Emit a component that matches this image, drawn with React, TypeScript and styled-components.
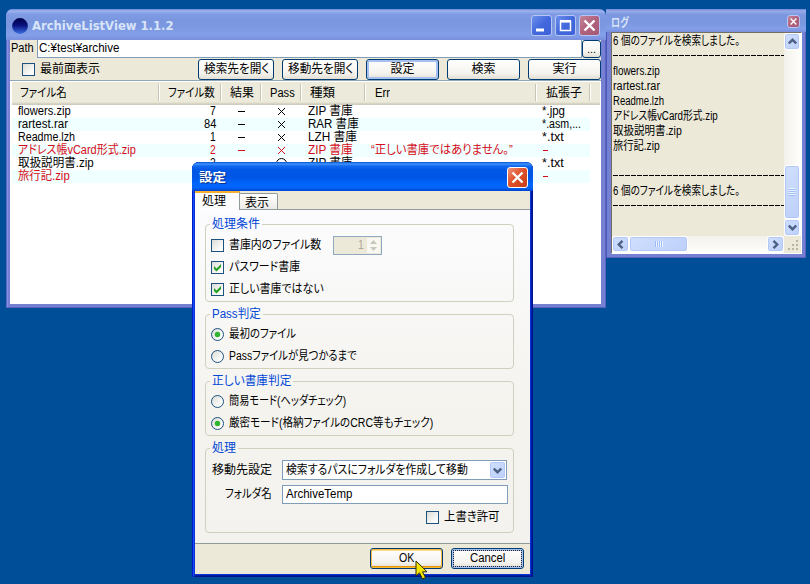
import React, { useLayoutEffect, useRef, useState } from "react";
import styled, { createGlobalStyle, css } from "styled-components";

const Global = createGlobalStyle`
  * { box-sizing: border-box; }
  body { margin: 0; overflow: hidden; background: #004e98; }
  body, button, input { font: 12px/13px "Liberation Sans", "Noto Sans CJK JP", sans-serif; color: #000; }
`;

const Desktop = styled.main`
  position: relative;
  width: 810px;
  height: 584px;
  overflow: hidden;
  background: #004e98;
`;

/* ---------- text set to a known advance width ---------- */
const FitBox = styled.span`
  display: inline-block;
  flex: none;
  height: 13px;
  line-height: 13px;
  white-space: pre;
  text-align: left;
  vertical-align: top;
`;
const FitInner = styled.span`
  display: inline-block;
  height: 13px;
  line-height: 13px;
  font-feature-settings: "palt";
  transform-origin: 0 50%;
`;
function Fit({ w, children }: { w: number; children: string }) {
  const ref = useRef<HTMLSpanElement>(null);
  const [scale, setScale] = useState(1);
  useLayoutEffect(() => {
    if (ref.current && ref.current.offsetWidth) setScale(w / ref.current.offsetWidth);
  }, [w, children]);
  return (
    <FitBox style={{ width: w }}>
      <FitInner ref={ref} style={{ transform: `scaleX(${scale})` }}>{children}</FitInner>
    </FitBox>
  );
}

/* ---------- window frames ---------- */
const MainWindow = styled.section`
  position: absolute;
  left: 6px;
  top: 9px;
  width: 600px;
  height: 299px;
  display: flex;
  flex-direction: column;
  padding: 0 5px 4px 4px;
  border-radius: 7px 7px 0 0;
  background: #7680d2;
  box-shadow: inset 1px 0 #5a68c8, inset -1px -1px #5a62c0, inset 2px 0 #8490e0;
`;
const LogWindow = styled.section`
  position: absolute;
  left: 606px;
  top: 9px;
  width: 200px;
  height: 249px;
  display: flex;
  flex-direction: column;
  padding: 0 4px 4px 5px;
  background: #7680d2;
  box-shadow: inset 1px 0 #4a58b8, inset -1px -1px #5a62c0;
`;
const Dialog = styled.section`
  position: absolute;
  left: 192px;
  top: 162px;
  width: 341px;
  height: 415px;
  display: flex;
  flex-direction: column;
  padding: 0 3px 3px;
  border-radius: 7px 7px 0 0;
  background: #0831d9;
  box-shadow: inset 1px 0 #0019cf, inset 2px 0 #1650ee, inset -1px -1px #00138c, inset -2px -2px #001ea0;
`;

const TitleBar = styled.header<{ $kind: "main" | "tool" | "dialog" }>`
  flex: none;
  display: flex;
  align-items: center;
  color: #d8e4f8;
  font-weight: bold;
  ${(p) => p.$kind === "main" && css`
    height: 31px;
    margin: 0 -5px 0 -4px;
    padding: 2px 6px 0 6px;
    border-radius: 7px 7px 0 0;
    font: bold 13px/15px "DejaVu Sans", sans-serif;
    background: linear-gradient(#6c86d8 0, #9db4ee 2px, #7f9be4 5px, #7a96df 12px, #7b98e0 18px, #829fe8 26px, #7b8fdc 31px);
  `}
  ${(p) => p.$kind === "tool" && css`
    height: 23px;
    margin: 0 -4px 0 -5px;
    padding: 2px 6px 0 5px;
    background: linear-gradient(#7186d8 0, #95abe9 2px, #7b97df 6px, #7b97e0 14px, #829fe8 20px, #7b8fdc 23px);
  `}
  ${(p) => p.$kind === "dialog" && css`
    height: 29px;
    margin: 0 -3px;
    padding: 1px 5px 0 7px;
    border-radius: 7px 7px 0 0;
    color: #fff;
    text-shadow: 1px 1px #0a318c;
    background: linear-gradient(#0850d0 0, #3c94ff 2px, #1268ef 4px, #0057e5 8px, #0055e5 15px, #0066ff 23px, #0063f6 26px, #0042cc 29px);
  `}
`;
const Spacer = styled.div`flex: 1;`;
const Caption = styled.h1<{ $indent?: number; $drop?: number }>`
  margin: ${(p) => p.$drop ?? 3}px 0 0 ${(p) => p.$indent ?? 0}px;
  font: inherit;
  line-height: 13px;
  white-space: nowrap;
`;
const CaptionButtons = styled.div`display: flex; gap: 3px;`;
const CaptionButton = styled.button<{ $tone: "blue" | "mauve" | "red"; $size?: number }>`
  display: block;
  flex: none;
  width: ${(p) => p.$size ?? 21}px;
  height: ${(p) => p.$size ?? 21}px;
  padding: 0;
  border: 1px solid ${(p) => (p.$tone === "red" ? "#fff" : "#b6c6f2")};
  border-radius: 3px;
  background: ${(p) => ({
    blue: "linear-gradient(135deg, #6d90ec, #4268dd 50%, #3e62d8)",
    mauve: "linear-gradient(135deg, #c28398, #b0617b 50%, #a65978)",
    red: "linear-gradient(135deg, #ee9478, #e0522c 45%, #c93c16)",
  })[p.$tone]};
  svg { display: block; width: 100%; height: 100%; }
`;
const Cross = () => (
  <svg viewBox="0 0 19 19"><path d="M4.5 4.5l10 10M14.5 4.5l-10 10" stroke="#fff" strokeWidth="2.4" /></svg>
);

/* ---------- main window ---------- */
const PathRow = styled.div`
  flex: none;
  display: flex;
  height: 18px;
  background: #ece9d8;
`;
const PathLabel = styled.label`
  width: 27px;
  padding: 2px 0 0 1px;
`;
const PathInput = styled.div`
  width: 546px;
  height: 18px;
  padding: 2px 1px;
  border: 1px solid #7f9db9;
  border-top: 0;
  background: #fff;
`;
const Toolbar = styled.div`
  flex: none;
  display: flex;
  align-items: center;
  gap: 8px;
  height: 23px;
  padding: 0 0 0 12px;
  background: #ece9d8;
  border-bottom: 1px solid #91a7b4;
`;
const Button = styled.button<{ $w: number; $look?: "focus" | "hot" | "dotted" }>`
  position: relative;
  flex: none;
  display: flex;
  align-items: center;
  justify-content: center;
  width: ${(p) => p.$w}px;
  height: 21px;
  padding: 0;
  border: 1px solid #003c74;
  border-radius: 3px;
  background: linear-gradient(#fff, #f4f3ee 70%, #e2ded2);
  ${(p) => (p.$look === "focus" || p.$look === "dotted") && css`
    box-shadow: inset 0 0 0 2px #a6c0f0;
  `}
  ${(p) => p.$look === "hot" && css`
    box-shadow: inset 0 0 0 1px #f8b83b, inset 0 -2px #e59700, inset 0 2px #fde09a;
  `}
  ${(p) => p.$look === "dotted" && css`
    &::after { content: ""; position: absolute; inset: 1px; border: 1px dotted #222; }
  `}
`;
const MiniButton = styled(Button)`
  width: 19px;
  height: 18px;
  padding-top: 1px;
  font-size: 11px;
`;
const List = styled.div`
  flex: 1;
  padding: 1px 1px 0 2px;
  background: #fff;
  overflow: hidden;
`;
const columns = "147px 62px 40px 40px 64px 171px 54px";
const HeaderRow = styled.div`
  display: grid;
  grid-template-columns: ${columns};
  height: 23px;
  padding-top: 1px;
  background: linear-gradient(#ebeadb 0, #ebeadb 20px, #dedac9 21px, #cbc7b8 23px);
`;
const HeaderCell = styled.div<{ $align?: string; $pad?: number }>`
  display: flex;
  height: 17px;
  margin-top: 1px;
  padding: 3px 5px 0 ${(p) => p.$pad ?? 5}px;
  justify-content: ${(p) => p.$align ?? "flex-start"};
  border-right: 1px solid #c7c5b2;
  box-shadow: 1px 0 #fff;
`;
const Row = styled.div<{ $red?: boolean }>`
  display: grid;
  grid-template-columns: ${columns};
  width: 578px;
  height: 13px;
  color: ${(p) => (p.$red ? "#d80c18" : "#000")};
  &:nth-child(odd) { background: #f0ffff; }
`;
const Cell = styled.div<{ $align?: string; $pad?: number }>`
  display: flex;
  height: 13px;
  padding: 0 5px 0 ${(p) => p.$pad ?? 5}px;
  justify-content: ${(p) => p.$align ?? "flex-start"};
  white-space: nowrap;
`;
const Mark = styled.svg`
  width: 11px;
  height: 13px;
  fill: none;
  stroke: currentColor;
`;
const Dash = () => <Mark viewBox="0 0 11 13"><path d="M2 6.5h7" shapeRendering="crispEdges" /></Mark>;
const Times = () => <Mark viewBox="0 0 11 13"><path d="M2 3l7 7M9 3l-7 7" /></Mark>;
const Circle = () => <Mark viewBox="0 0 11 13"><circle cx="5.5" cy="6.5" r="5" /></Mark>;

type Entry = { name: string; w: number; count?: string; open?: boolean; kind?: string; kw?: number; ext?: string; ew?: number; red?: boolean; err?: string };
const entries: Entry[] = [
  { name: "flowers.zip", w: 53, count: "7", kind: "ZIP 書庫", kw: 45, ext: "*.jpg", ew: 23 },
  { name: "rartest.rar", w: 50, count: "84", kind: "RAR 書庫", kw: 51, ext: "*.asm,...", ew: 39 },
  { name: "Readme.lzh", w: 57, count: "1", kind: "LZH 書庫", kw: 49, ext: "*.txt", ew: 22 },
  { name: "アドレス帳vCard形式.zip", w: 118, count: "2", kind: "ZIP 書庫", kw: 45, red: true, err: "“正しい書庫ではありません。”" },
  { name: "取扱説明書.zip", w: 76, count: "2", open: true, kind: "ZIP 書庫", kw: 45, ext: "*.txt", ew: 22 },
  { name: "旅行記.zip", w: 52, red: true },
];

/* ---------- checks and radios ---------- */
const Choice = styled.label`
  display: flex;
  align-items: center;
  gap: 5px;
  height: 22px;
`;
const Box = styled.span<{ $round?: boolean }>`
  flex: none;
  width: 13px;
  height: 13px;
  border: 1px solid #1c5180;
  border-radius: ${(p) => (p.$round ? "50%" : "0")};
  background: linear-gradient(135deg, #dcdcd7, #fff 85%);
  svg { display: block; width: 11px; height: 11px; }
`;
function Check({ on }: { on?: boolean }) {
  return <Box>{on && <svg viewBox="0 0 11 11"><path d="M2 4v3l2.5 2.5L9 5V2L4.5 6.5z" fill="#21a121" /></svg>}</Box>;
}
function Radio({ on }: { on?: boolean }) {
  return <Box $round>{on && <svg viewBox="0 0 11 11"><circle cx="5.5" cy="5.5" r="2.7" fill="#2fb52f" /></svg>}</Box>;
}

/* ---------- log window ---------- */
const LogBody = styled.div`
  flex: 1;
  display: grid;
  grid-template-columns: 172px 17px;
  grid-template-rows: 203px 17px;
  border: 1px solid #716f64;
  border-right-color: #fff;
  border-bottom-color: #fff;
  background: #ece9d8;
`;
const LogText = styled.div`
  padding: 1px 0 0 1px;
  overflow: hidden;
`;
const LogLine = styled.div`
  height: 15px;
  padding-top: 1px;
  white-space: nowrap;
`;
const Rule = styled.div`
  height: 15px;
  background: repeating-linear-gradient(90deg, #000 0 5px, transparent 5px 6px) 0 6px / 100% 1px no-repeat;
`;
const Track = styled.div<{ $h?: boolean }>`
  display: flex;
  flex-direction: ${(p) => (p.$h ? "row" : "column")};
  background: linear-gradient(${(p) => (p.$h ? "180deg" : "90deg")}, #f3f1ec, #fefefb);
`;
const ScrollPart = styled.div<{ $w: number; $h: number }>`
  flex: none;
  display: flex;
  align-items: center;
  justify-content: center;
  width: ${(p) => p.$w}px;
  height: ${(p) => p.$h}px;
  border: 1px solid #fff;
  border-radius: 3px;
  background: linear-gradient(135deg, #d0dffe, #bdd0fb);
  box-shadow: inset 0 0 0 1px #b4c8f6;
`;
const Chevron = ({ turn = 0 }: { turn?: number }) => (
  <svg width="9" height="9" viewBox="0 0 9 9">
    <path d="M.8 2.5L4.5 6.2 8.2 2.5" fill="none" stroke="#4d6185" strokeWidth="2.4" transform={`rotate(${turn} 4.5 4.5)`} />
  </svg>
);
const Grip = ({ turn = 0 }: { turn?: number }) => (
  <svg width="8" height="8" viewBox="0 0 8 8">
    <g transform={`rotate(${turn} 4 4)`}>
      <path d="M1 .5h6M1 2.5h6M1 4.5h6M1 6.5h6" stroke="#eef4fe" />
      <path d="M1 1.5h6M1 3.5h6M1 5.5h6M1 7.5h6" stroke="#8cb0f8" strokeWidth=".7" />
    </g>
  </svg>
);
const SizeCorner = styled.svg`width: 16px; height: 16px;`;

/* ---------- settings dialog ---------- */
const Tabs = styled.div`
  flex: none;
  display: flex;
  align-items: flex-end;
  height: 19px;
  background: linear-gradient(#ece9d8 18px, #919b9c 18px);
`;
const Tab = styled.div<{ $active?: boolean }>`
  display: flex;
  padding-left: 5px;
  ${(p) => p.$active ? css`
    width: 45px;
    height: 19px;
    padding: 2px 0 0 7px;
    border-top: 2px solid #f5b030;
    border-right: 1px solid #919b9c;
    background: #fdfdfe;
  ` : css`
    width: 38px;
    height: 17px;
    padding-top: 3px;
    border: solid #919b9c;
    border-width: 1px 1px 1px 0;
    border-radius: 0 2px 0 0;
    background: linear-gradient(#fff, #ecebe5);
  `}
`;
const Page = styled.div`
  flex: 1;
  display: flex;
  flex-direction: column;
  gap: 12px;
  padding: 14px 16px 0 10px;
  background: linear-gradient(#fcfcfe, #f4f3ee 60%, #f3f2ee);
  border-bottom: 1px solid #919b9c;
`;
const Group = styled.section<{ $h: number }>`
  flex: none;
  height: ${(p) => p.$h}px;
  padding: 7px 5px 0;
  border: 1px solid #d0d0bf;
  border-radius: 4px;
`;
const Legend = styled.div<{ $after: number; $tone: string }>`
  width: max-content;
  height: 13px;
  margin: -14px 0 ${(p) => p.$after}px -1px;
  padding: 0 2px;
  background: ${(p) => p.$tone};
  color: #0046d5;
`;
const OptionRow = styled.div`display: flex; align-items: center; gap: 12px; height: 22px;`;
const Spinner = styled.div`
  display: flex;
  align-items: center;
  justify-content: flex-end;
  gap: 3px;
  width: 49px;
  height: 19px;
  margin-top: 1px;
  padding-right: 1px;
  border: 1px solid #8fa9c0;
  background: #ece9d8;
  color: #aca899;
`;
const SpinButtons = styled.svg`width: 13px; height: 15px; background: #f8f7f2;`;
const FormRow = styled.div`
  display: flex;
  align-items: center;
  gap: 10px;
  margin-top: 5px;
`;
const FormLabel = styled.label`display: flex; justify-content: flex-end; width: 61px;`;
const Field = styled.div<{ $w: number; $h: number }>`
  display: flex;
  align-items: center;
  justify-content: space-between;
  width: ${(p) => p.$w}px;
  height: ${(p) => p.$h}px;
  padding: 0 0 0 3px;
  border: 1px solid #7f9db9;
  background: #fff;
`;
const Overwrite = styled.div`display: flex; justify-content: flex-end; padding: 2px 8px 0 0;`;
const Footer = styled.footer`
  flex: none;
  display: flex;
  justify-content: flex-end;
  gap: 8px;
  height: 30px;
  padding: 4px 6px 0 0;
  background: #ece9d8;
`;
const Pointer = styled.svg`
  position: absolute;
  left: 415px;
  top: 560px;
  width: 14px;
  height: 21px;
`;

export default function App() {
  return (
    <Desktop>
      <Global />
      <MainWindow>
        <TitleBar $kind="main">
          <svg width="16" height="16" viewBox="0 0 16 16">
            <defs>
              <linearGradient id="orb" x2="0" y2="1">
                <stop stopColor="#000048" />
                <stop offset=".45" stopColor="#08107c" />
                <stop offset="1" stopColor="#3a70e4" />
              </linearGradient>
            </defs>
            <circle cx="8" cy="8" r="7.9" fill="url(#orb)" />
          </svg>
          <Caption $indent={4} $drop={0}><Fit w={142}>ArchiveListView 1.1.2</Fit></Caption>
          <Spacer />
          <CaptionButtons>
            <CaptionButton $tone="blue"><svg viewBox="0 0 19 19"><path d="M4 14h8" stroke="#fff" strokeWidth="3" /></svg></CaptionButton>
            <CaptionButton $tone="blue"><svg viewBox="0 0 19 19"><path d="M4.5 5.5h10v9h-10z" stroke="#fff" strokeWidth="1.5" fill="none" /><path d="M4 5.2h11" stroke="#fff" strokeWidth="2.5" /></svg></CaptionButton>
            <CaptionButton $tone="mauve"><Cross /></CaptionButton>
          </CaptionButtons>
        </TitleBar>
        <PathRow>
          <PathLabel><Fit w={23}>Path</Fit></PathLabel>
          <PathInput><Fit w={80}>C:¥test¥archive</Fit></PathInput>
          <MiniButton $w={19}>...</MiniButton>
        </PathRow>
        <Toolbar>
          <Choice><Check /><Fit w={60}>最前面表示</Fit></Choice>
          <Spacer />
          <Button $w={76}><Fit w={65}>検索先を開く</Fit></Button>
          <Button $w={76}><Fit w={65}>移動先を開く</Fit></Button>
          <Button $w={73} $look="focus"><Fit w={24}>設定</Fit></Button>
          <Button $w={73}><Fit w={24}>検索</Fit></Button>
          <Button $w={73}><Fit w={24}>実行</Fit></Button>
        </Toolbar>
        <List>
          <HeaderRow>
            <HeaderCell $pad={8}><Fit w={47}>ファイル名</Fit></HeaderCell>
            <HeaderCell $align="flex-end"><Fit w={47}>ファイル数</Fit></HeaderCell>
            <HeaderCell $pad={9}><Fit w={24}>結果</Fit></HeaderCell>
            <HeaderCell $pad={9}><Fit w={25}>Pass</Fit></HeaderCell>
            <HeaderCell $pad={9}><Fit w={25}>種類</Fit></HeaderCell>
            <HeaderCell $pad={10}><Fit w={15}>Err</Fit></HeaderCell>
            <HeaderCell $pad={10}><Fit w={36}>拡張子</Fit></HeaderCell>
          </HeaderRow>
          {entries.map((e) => (
            <Row key={e.name} $red={e.red}>
              <Cell $pad={6}><Fit w={e.w}>{e.name}</Fit></Cell>
              <Cell $align="flex-end">{e.count && <Fit w={e.count.length * 6}>{e.count}</Fit>}</Cell>
              <Cell $align="center"><Dash /></Cell>
              <Cell $align="center">{e.open ? <Circle /> : <Times />}</Cell>
              <Cell $pad={7}>{e.kind && <Fit w={e.kw ?? 45}>{e.kind}</Fit>}</Cell>
              <Cell $pad={6}>{e.err && <Fit w={142}>{e.err}</Fit>}</Cell>
              <Cell $pad={6}>
                {e.ext ? <Fit w={e.ew ?? 22}>{e.ext}</Fit> : <Mark viewBox="0 0 11 13"><path d="M1 6.5h5" shapeRendering="crispEdges" /></Mark>}
              </Cell>
            </Row>
          ))}
        </List>
      </MainWindow>

      <LogWindow>
        <TitleBar $kind="tool">
          <Caption><Fit w={18}>ログ</Fit></Caption>
          <Spacer />
          <CaptionButton $tone="mauve" $size={13}><Cross /></CaptionButton>
        </TitleBar>
        <LogBody>
          <LogText>
            <LogLine><Fit w={127}>6 個のファイルを検索しました。</Fit></LogLine>
            <Rule />
            <LogLine><Fit w={47}>flowers.zip</Fit></LogLine>
            <LogLine><Fit w={47}>rartest.rar</Fit></LogLine>
            <LogLine><Fit w={51}>Readme.lzh</Fit></LogLine>
            <LogLine><Fit w={105}>アドレス帳vCard形式.zip</Fit></LogLine>
            <LogLine><Fit w={69}>取扱説明書.zip</Fit></LogLine>
            <LogLine><Fit w={47}>旅行記.zip</Fit></LogLine>
            <LogLine />
            <Rule />
            <LogLine><Fit w={127}>6 個のファイルを検索しました。</Fit></LogLine>
            <Rule />
          </LogText>
          <Track>
            <ScrollPart $w={16} $h={17}><Chevron turn={180} /></ScrollPart>
            <Spacer />
            <ScrollPart $w={16} $h={54}><Grip /></ScrollPart>
            <ScrollPart $w={16} $h={17}><Chevron /></ScrollPart>
          </Track>
          <Track $h>
            <ScrollPart $w={17} $h={16}><Chevron turn={90} /></ScrollPart>
            <ScrollPart $w={59} $h={16}><Grip turn={90} /></ScrollPart>
            <Spacer />
            <ScrollPart $w={17} $h={16}><Chevron turn={-90} /></ScrollPart>
          </Track>
          <SizeCorner viewBox="0 0 16 16">
            <path d="M12 4h2v2h-2zM8 8h2v2H8zM12 8h2v2h-2zM4 12h2v2H4zM8 12h2v2H8zM12 12h2v2h-2z" fill="#b8b4a2" />
          </SizeCorner>
        </LogBody>
      </LogWindow>

      <Dialog>
        <TitleBar $kind="dialog">
          <Caption><Fit w={27}>設定</Fit></Caption>
          <Spacer />
          <CaptionButton $tone="red"><Cross /></CaptionButton>
        </TitleBar>
        <Tabs>
          <Tab $active><Fit w={24}>処理</Fit></Tab>
          <Tab><Fit w={24}>表示</Fit></Tab>
        </Tabs>
        <Page>
          <Group $h={78}>
            <Legend $after={3} $tone="#fbfbfd"><Fit w={48}>処理条件</Fit></Legend>
            <OptionRow>
              <Choice><Check /><Fit w={92}>書庫内のファイル数</Fit></Choice>
              <Spinner>
                <Fit w={6}>1</Fit>
                <SpinButtons viewBox="0 0 13 15">
                  <path d="M6.5 2L10 6H3zM6.5 13L10 9H3z" fill="#c9c7ba" />
                </SpinButtons>
              </Spinner>
            </OptionRow>
            <Choice><Check on /><Fit w={71}>パスワード書庫</Fit></Choice>
            <Choice><Check on /><Fit w={95}>正しい書庫ではない</Fit></Choice>
          </Group>
          <Group $h={55}>
            <Legend $after={2} $tone="#f8f8f7"><Fit w={49}>Pass判定</Fit></Legend>
            <Choice><Radio on /><Fit w={67}>最初のファイル</Fit></Choice>
            <Choice><Radio /><Fit w={128}>Passファイルが見つかるまで</Fit></Choice>
          </Group>
          <Group $h={55}>
            <Legend $after={2} $tone="#f5f5f2"><Fit w={79}>正しい書庫判定</Fit></Legend>
            <Choice><Radio /><Fit w={117}>簡易モード(ヘッダチェック)</Fit></Choice>
            <Choice><Radio on /><Fit w={204}>厳密モード(格納ファイルのCRC等もチェック)</Fit></Choice>
          </Group>
          <Group $h={85}>
            <Legend $after={0} $tone="#f4f3ee"><Fit w={24}>処理</Fit></Legend>
            <FormRow>
              <FormLabel><Fit w={60}>移動先設定</Fit></FormLabel>
              <Field $w={225} $h={20}>
                <Fit w={182}>検索するパスにフォルダを作成して移動</Fit>
                <ScrollPart $w={17} $h={18}><Chevron /></ScrollPart>
              </Field>
            </FormRow>
            <FormRow>
              <FormLabel><Fit w={47}>フォルダ名</Fit></FormLabel>
              <Field $w={226} $h={19}><Fit w={66}>ArchiveTemp</Fit></Field>
            </FormRow>
            <Overwrite><Choice><Check /><Fit w={56}>上書き許可</Fit></Choice></Overwrite>
          </Group>
        </Page>
        <Footer>
          <Button $w={73} $look="hot"><Fit w={15}>OK</Fit></Button>
          <Button $w={73} $look="dotted"><Fit w={35}>Cancel</Fit></Button>
        </Footer>
      </Dialog>
      <Pointer viewBox="0 0 14 21">
        <path d="M1 1v15l3.5-3.2 3 6.2 3-1.4-3-5.8H12z" fill="#f2e500" stroke="#302c00" strokeLinejoin="round" />
      </Pointer>
    </Desktop>
  );
}
